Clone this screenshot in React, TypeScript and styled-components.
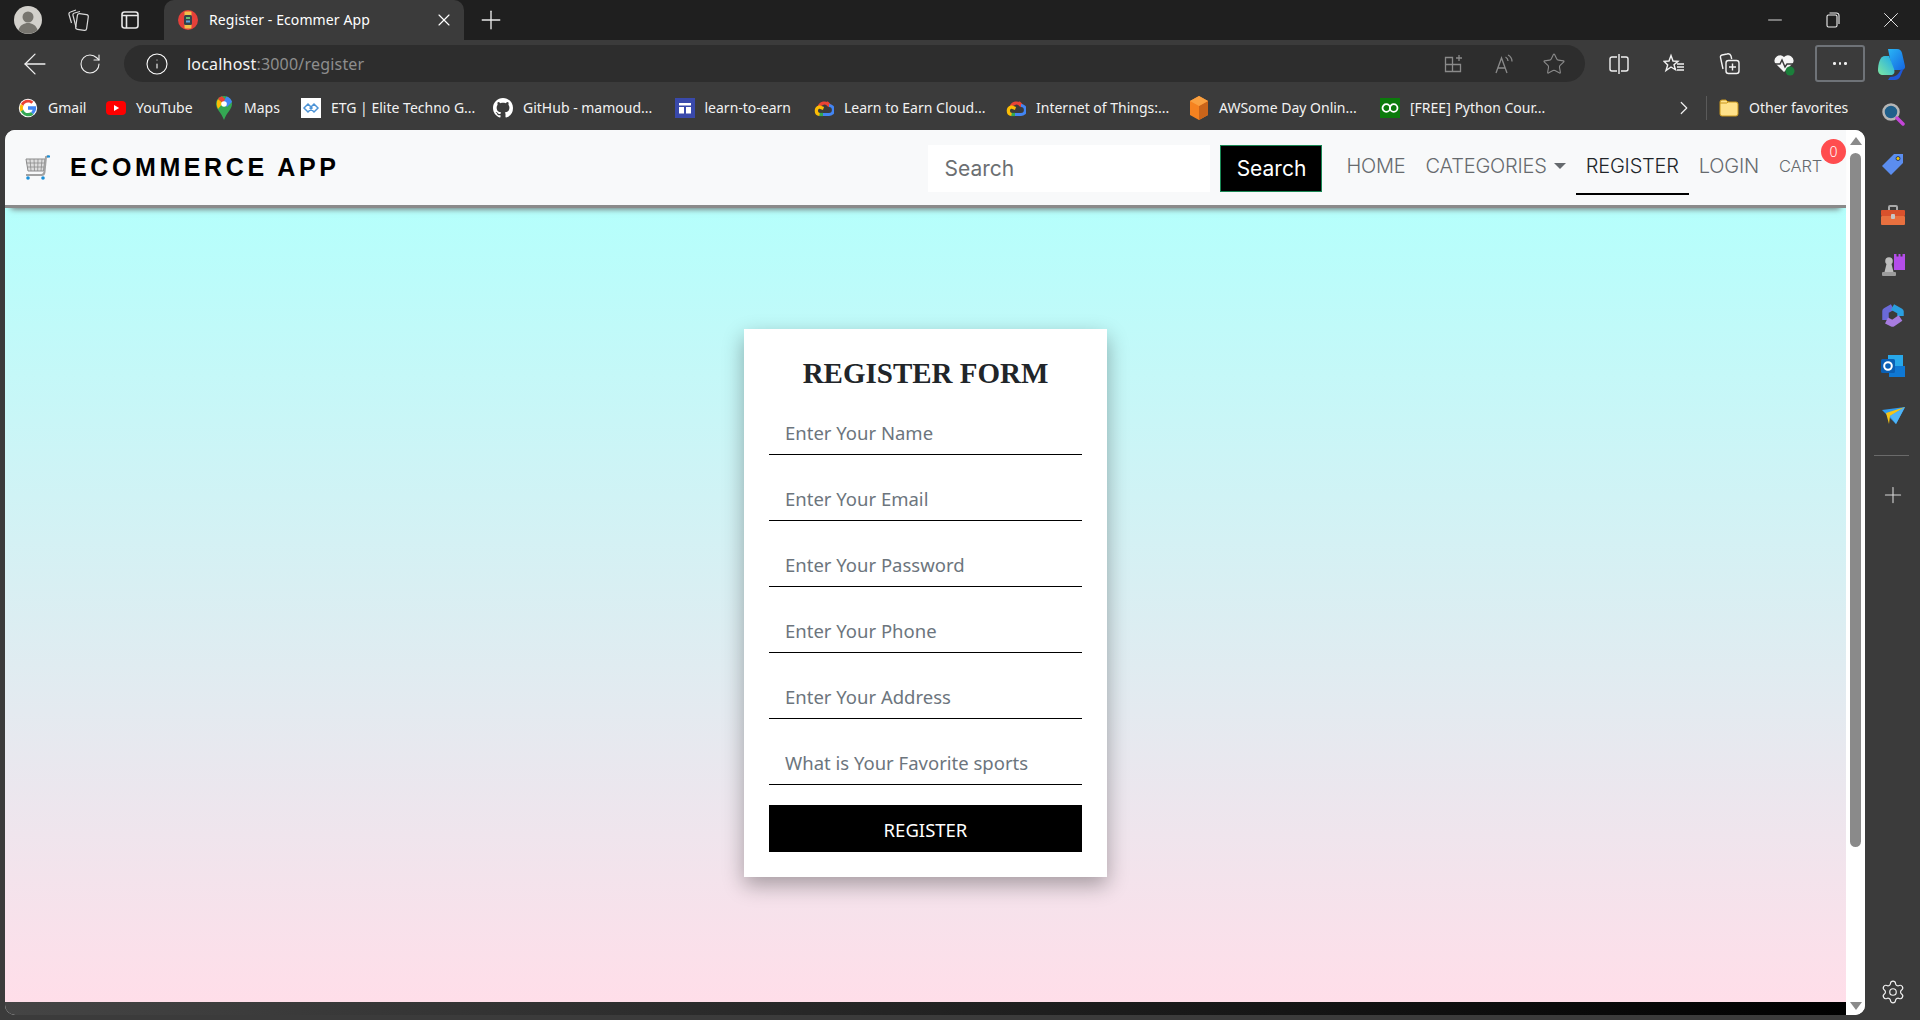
import React from "react"
import styled, { createGlobalStyle } from "styled-components"
import {
  ArrowLeft,
  ChevronRight,
  Info,
  Minus,
  Plus,
  RotateCw,
  Settings,
  Star,
  X,
} from "lucide-react"

const GlobalStyle = createGlobalStyle`
  html, body {
    margin: 0;
    padding: 0;
    background: #3b3b3b;
  }
  * {
    box-sizing: border-box;
  }
`

const Shell = styled.div`
  width: 1920px;
  height: 1020px;
  overflow: hidden;
  display: flex;
  flex-direction: column;
  background: #3b3b3b;
  font-family: "Noto Sans", sans-serif;
  color: #fff;
`

const TabStrip = styled.div`
  height: 40px;
  flex: none;
  display: flex;
  align-items: stretch;
  padding-left: 4px;
  background: #1f1f1f;
`

const Slot = styled.div<{ $w: number }>`
  width: ${p => p.$w}px;
  flex: none;
  display: flex;
  align-items: center;
  justify-content: center;
  color: #e8e8e8;
`

const Tab = styled.div`
  width: 300px;
  margin-left: 8px;
  flex: none;
  display: flex;
  align-items: center;
  background: #3b3b3b;
  border-radius: 10px 10px 0 0;
  padding: 0 10px 0 14px;
`

const TabTitle = styled.span`
  margin-left: 11px;
  padding-bottom: 2px;
  font-size: 14px;
  letter-spacing: 0.1px;
  flex: 1;
  white-space: nowrap;
`

const Spacer = styled.div`
  flex: 1;
`

const Toolbar = styled.div`
  height: 42px;
  flex: none;
  display: flex;
  align-items: flex-end;
  padding: 0 0 0 7px;
`

const ToolSlot = styled.div<{ $w: number }>`
  width: ${p => p.$w}px;
  height: 37px;
  flex: none;
  display: flex;
  align-items: center;
  justify-content: center;
  color: #f0f0f0;
`

const AddressBar = styled.div`
  width: 1461px;
  height: 37px;
  margin-left: 7px;
  margin-right: 6px;
  flex: none;
  display: flex;
  align-items: center;
  padding: 0 6px 0 21px;
  background: #2d2d2d;
  border-radius: 19px;
`

const Url = styled.div`
  margin-left: 18px;
  flex: 1;
  font-size: 16px;
  letter-spacing: 0.2px;
  color: #f4f4f4;
  span {
    color: #8e8e8e;
  }
`

const AddressIcon = styled.span`
  width: 50px;
  display: flex;
  justify-content: center;
  color: #8a8a8a;
`

const MoreBox = styled.div`
  width: 50px;
  height: 37px;
  margin-left: 4px;
  flex: none;
  display: flex;
  align-items: center;
  justify-content: center;
  gap: 3px;
  border: 2px solid #6f7378;
  border-radius: 3px;
`

const Dot = styled.i`
  width: 2.5px;
  height: 2.5px;
  border-radius: 50%;
  background: #f0f0f0;
`

const Body = styled.div`
  flex: 1;
  display: flex;
  min-height: 0;
`

const MainColumn = styled.div`
  width: 1865px;
  flex: none;
  display: flex;
  flex-direction: column;
`

const BookmarkBar = styled.div`
  height: 48px;
  flex: none;
  display: flex;
  align-items: center;
  padding-left: 18px;
  padding-top: 3px;
`

const Bookmark = styled.div`
  display: flex;
  align-items: center;
  gap: 10px;
  flex: none;
`

const BookmarkIcon = styled.span`
  width: 20px;
  height: 24px;
  flex: none;
  display: flex;
  align-items: center;
  justify-content: center;
`

const BookmarkLabel = styled.span<{ $w: number }>`
  width: ${p => p.$w}px;
  font-size: 14px;
  color: #f2f2f2;
  white-space: nowrap;
`

const BarDivider = styled.div`
  width: 1px;
  height: 24px;
  background: #5a5a5a;
  margin: 0 12px 0 11px;
`

const Viewport = styled.div`
  margin-left: 5px;
  height: 885px;
  flex: none;
  display: flex;
  overflow: hidden;
  border-radius: 10px;
  background: #fff;
`

const Page = styled.div`
  width: 1841px;
  flex: none;
  display: flex;
  flex-direction: column;
`

const Navbar = styled.nav`
  position: relative;
  z-index: 1;
  height: 75px;
  flex: none;
  display: flex;
  align-items: center;
  padding: 0 14px 0 20px;
  background: #f8f9fa;
  box-shadow: 0 3px 0 #8a8a8a, 0 10px 6px -6px #6f6f6f;
`

const Brand = styled.div`
  display: flex;
  align-items: center;
  gap: 19px;
  font-family: "Liberation Sans", sans-serif;
  font-size: 25px;
  font-weight: 700;
  letter-spacing: 3.6px;
  color: #000;
`

const SearchInput = styled.div`
  width: 282px;
  height: 47px;
  margin-top: 1px;
  display: flex;
  align-items: center;
  padding: 1px 0 0 16px;
  background: #fff;
  font-family: Inter, sans-serif;
  font-size: 21px;
  color: #6c6f72;
`

const SearchButton = styled.div`
  width: 102px;
  height: 47px;
  margin: 1px 0 0 10px;
  display: flex;
  align-items: center;
  justify-content: center;
  padding-top: 1px;
  background: #000;
  border: 1px solid #198754;
  font-family: Inter, sans-serif;
  font-size: 21px;
  color: #fff;
`

const NavLinks = styled.div`
  margin-left: 14px;
  display: flex;
  align-items: stretch;
  height: 54px;
`

const NavLink = styled.div<{ $active?: boolean; $small?: boolean }>`
  position: relative;
  display: flex;
  align-items: center;
  gap: 7px;
  padding: 0 10px 1px;
  font-family: Inter, sans-serif;
  font-weight: 300;
  font-size: ${p => (p.$small ? 16.5 : 20)}px;
  letter-spacing: -0.2px;
  white-space: nowrap;
  color: ${p => (p.$active ? "#212529" : "#666a6e")};
  border-bottom: 2px solid ${p => (p.$active ? "#000" : "transparent")};
`

const Caret = styled.i`
  width: 0;
  height: 0;
  border-left: 6px solid transparent;
  border-right: 6px solid transparent;
  border-top: 6px solid #666a6e;
`

const Badge = styled.span`
  position: absolute;
  right: -14px;
  top: -2px;
  width: 25px;
  height: 25px;
  display: flex;
  align-items: center;
  justify-content: center;
  border-radius: 50%;
  background: #ff4d4f;
  color: #fff;
  font-family: "Noto Sans", sans-serif;
  font-size: 14px;
  letter-spacing: 0;
`

const Hero = styled.main`
  flex: 1;
  display: flex;
  align-items: center;
  justify-content: center;
  padding-bottom: 1px;
  background-image: linear-gradient(0deg, #ffdee9 0%, #b5fffc 100%);
`

const FormCard = styled.form`
  width: 363px;
  height: 548px;
  padding: 25px;
  display: flex;
  flex-direction: column;
  background: #fff;
  box-shadow: 0 8px 20px rgba(0, 0, 0, 0.32);
`

const FormTitle = styled.h4`
  margin: 0 0 18px;
  height: 37px;
  padding-top: 1px;
  text-align: center;
  font-family: "Liberation Serif", serif;
  font-weight: 700;
  font-size: 29px;
  line-height: 36px;
  color: #212529;
`

const Field = styled.input`
  width: 100%;
  height: 46px;
  flex: none;
  margin-bottom: 20px;
  padding: 1px 16px 0;
  border: none;
  border-bottom: 1.5px solid #000;
  outline: none;
  background: transparent;
  font-family: "Noto Sans", sans-serif;
  font-size: 18.5px;
  color: #212529;
  &::placeholder {
    color: #6c757d;
    opacity: 1;
  }
`

const SubmitButton = styled.button`
  width: 100%;
  height: 47px;
  flex: none;
  padding-top: 2px;
  border: none;
  background: #000;
  color: #fff;
  font-family: "Noto Sans", sans-serif;
  font-size: 18.5px;
`

const Scrollbar = styled.div`
  width: 19px;
  flex: none;
  display: flex;
  flex-direction: column;
  align-items: center;
  background: #fff;
  padding-top: 7px;
`

const ArrowUp = styled.i`
  width: 0;
  height: 0;
  border-left: 6px solid transparent;
  border-right: 6px solid transparent;
  border-bottom: 8px solid #8a8a8a;
`

const ArrowDown = styled.i`
  width: 0;
  height: 0;
  margin-top: auto;
  margin-bottom: 5px;
  border-left: 6px solid transparent;
  border-right: 6px solid transparent;
  border-top: 8px solid #8a8a8a;
`

const Thumb = styled.div`
  width: 11px;
  height: 694px;
  margin-top: 8px;
  border-radius: 6px;
  background: #8a8a8a;
`

const BottomBar = styled.div`
  height: 13px;
  flex: none;
  background: linear-gradient(90deg, #454545 0%, #000 100%);
`

const Sidebar = styled.aside`
  width: 55px;
  flex: none;
  display: flex;
  flex-direction: column;
  align-items: center;
  padding: 7px 0 3px;
  color: #d8d8d8;
`

const SideSlot = styled.div`
  height: 50.3px;
  width: 100%;
  flex: none;
  display: flex;
  align-items: center;
  justify-content: center;
`

const SideDivider = styled.div`
  width: 35px;
  height: 1px;
  margin: 14px 0 14px -2px;
  flex: none;
  background: #6a6a6a;
`

const SettingsSlot = styled(SideSlot)`
  margin-top: auto;
  color: #f0f0f0;
`

const Avatar = () => (
  <svg width="28" height="28" viewBox="0 0 28 28">
    <circle cx="14" cy="14" r="14" fill="#d2d0cb" />
    <circle cx="14" cy="11" r="5.5" fill="#77756f" />
    <path d="M4.5 24c1.5-5 5.500-7 9.500-7s8 2 9.500 7a14 14 0 0 1-19 0z" fill="#77756f" />
  </svg>
)

const CollectionsTabs = () => (
  <svg width="24" height="24" viewBox="0 0 24 24" fill="none" stroke="#d8d8d8" strokeWidth="1.2">
    <rect x="10.500" y="6" width="11" height="16" rx="2" transform="rotate(8 16 14)" />
    <path d="M10 19 7 7.500A2 2 0 0 1 8.500 5L14 3.500" />
    <path d="M5.500 15 3 6.500A2 2 0 0 1 4.500 4L10 2" />
  </svg>
)

const VerticalTabs = () => (
  <svg width="20" height="20" viewBox="0 0 20 20" fill="none" stroke="#e8e8e8" strokeWidth="1.6">
    <rect x="2" y="2" width="16" height="16" rx="2.500" />
    <path d="M2 5.500h16M6.500 5.500V18" />
  </svg>
)

const SiteFavicon = () => (
  <svg width="20" height="20" viewBox="0 0 20 20">
    <circle cx="10" cy="10" r="10" fill="#e5403a" />
    <rect x="6.500" y="1.500" width="7" height="17" rx="1" fill="#f0c04a" />
    <rect x="6" y="5" width="8" height="10" rx="1.500" fill="#35424a" />
    <rect x="8" y="7" width="4" height="2" fill="#63c174" />
    <rect x="8" y="10.500" width="4" height="2" fill="#63a6e0" />
  </svg>
)

const RestoreIcon = () => (
  <svg width="14" height="16" viewBox="0 0 14 16" fill="none" stroke="#f0f0f0" strokeWidth="1.1">
    <rect x="1" y="3" width="10" height="12" rx="1.500" />
    <path d="M3.500 1h7A2.500 2.500 0 0 1 13 3.500V12" />
  </svg>
)

const AppsAdd = () => (
  <svg width="20" height="20" viewBox="0 0 20 20" fill="none" stroke="#8a8a8a" strokeWidth="1.300">
    <path d="M1.500 3.500h7v14h-7zM8.500 10.500h8v7h-8zM1.500 10.500h7M15 1v6M12 4h6" />
  </svg>
)

const ReadAloud = () => (
  <svg width="20" height="20" viewBox="0 0 20 20" fill="none" stroke="#8a8a8a" strokeWidth="1.300">
    <path d="M2 19 7.500 4 13 19M4 14h7M11.500 3c1.500.8 2.500 2.300 2.500 4M14 1c2.500 1.300 4 3.500 4 6.500" />
  </svg>
)

const SplitIcon = () => (
  <svg width="20" height="22" viewBox="0 0 20 22" fill="none" stroke="#f2f2f2" strokeWidth="1.400">
    <path d="M8 4H3a2 2 0 0 0-2 2v10a2 2 0 0 0 2 2h5M12 4h5a2 2 0 0 1 2 2v10a2 2 0 0 1-2 2h-5M10 1v20" />
  </svg>
)

const FavoritesIcon = () => (
  <svg width="22" height="22" viewBox="0 0 22 22" fill="none" stroke="#f2f2f2" strokeWidth="1.400">
    <path d="M8 2.500 10 8l5 .3-4 3.500 1.500 5L8 14l-5 3.500 1.700-5.500L1 8.300 6 8z" />
    <path d="M14 11h7M14 14h7M14 17h7" />
  </svg>
)

const CollectionsIcon = () => (
  <svg width="22" height="24" viewBox="0 0 22 24" fill="none" stroke="#f2f2f2" strokeWidth="1.400">
    <path d="M9 2 4 3a2 2 0 0 0-1.500 2.500L5 17M9 2c2-.5 3.500.5 4 2l.7 3" />
    <rect x="8" y="8.500" width="13" height="13" rx="2.500" />
    <path d="M14.500 11.500v7M11 15h7" />
  </svg>
)

const HeartIcon = () => (
  <svg width="24" height="24" viewBox="0 0 24 24">
    <path d="M12 20 3 11a5.500 5.500 0 0 1 9-6 5.500 5.500 0 0 1 9 6z" fill="#f5f5f5" />
    <path d="M2 12h6l2-4 3 7 2-3h7" fill="none" stroke="#3b3b3b" strokeWidth="1.500" />
    <circle cx="18" cy="19" r="4.500" fill="#1b7f3b" />
  </svg>
)

const CopilotIcon = () => (
  <svg width="30" height="32" viewBox="0 0 30 32">
    <defs>
      <linearGradient id="cpA" x1="0" y1="0" x2="1" y2="1">
        <stop offset="0" stopColor="#29b6f6" />
        <stop offset="1" stopColor="#1565e0" />
      </linearGradient>
      <linearGradient id="cpB" x1="0" y1="1" x2="1" y2="0">
        <stop offset="0" stopColor="#7ee7a0" />
        <stop offset="1" stopColor="#19a8f0" />
      </linearGradient>
    </defs>
    <path d="M11 1h9c3 0 4.500 2 5 4l3 13c.5 2-1 4-3.500 4H16l-3-11z" fill="url(#cpA)" />
    <path d="M8 8h4l5 13c1 3 .5 5-2 6H6c-3 0-5-2-5-5 0-6 2-14 7-14z" fill="url(#cpB)" />
    <path d="M13 29c6 0 9-3 11-8l2 1-3 7c-1 2-3 3-5 3h-7z" fill="#1f57d6" />
  </svg>
)

const GoogleIcon = () => (
  <svg width="20" height="20" viewBox="0 0 48 48">
    <path fill="#fff" d="M24 2a22 22 0 1 0 0 44 22 22 0 0 0 0-44z" />
    <path fill="#ea4335" d="M24 11c3.500 0 6 1.300 8 3l5-5c-3.400-3-7.800-5-13-5C16.500 4 10 8.300 6.800 14.500l5.900 4.600C14.200 14.500 18.700 11 24 11z" />
    <path fill="#4285f4" d="M43.500 24.500c0-1.600-.1-2.800-.4-4.500H24v8h11c-.5 2.600-2 4.700-4.200 6.200l5.800 4.500c3.800-3.500 6.900-8.500 6.900-14.200z" />
    <path fill="#fbbc05" d="M12.700 28.900a12 12 0 0 1 0-9.800l-5.900-4.600a20 20 0 0 0 0 19z" />
    <path fill="#34a853" d="M24 44c5.400 0 9.800-1.800 13-5.300l-6.200-4.500c-1.700 1.200-4 2-6.800 2-5.300 0-9.800-3.600-11.300-8.300l-5.900 4.600C10 38 16.500 44 24 44z" />
  </svg>
)

const YouTubeIcon = () => (
  <svg width="20" height="20" viewBox="0 0 20 20">
    <rect y="3" width="20" height="14" rx="4" fill="#f00" />
    <path d="M8 7l5.200 3L8 13z" fill="#fff" />
  </svg>
)

const MapsIcon = () => (
  <svg width="16" height="24" viewBox="0 0 16 24">
    <path d="M8 0a8 8 0 0 1 8 8c0 5-5 8-8 16-3-8-8-11-8-16a8 8 0 0 1 8-8z" fill="#34a853" />
    <path d="M2 3l5 4-5 6C.5 10 0 6 2 3z" fill="#fbbc05" />
    <path d="M2 3a8 8 0 0 1 4-2.800L10 4 7 7z" fill="#ea4335" />
    <path d="M10.500.500A8 8 0 0 1 16 6l-5 5-4-4z" fill="#4285f4" />
    <circle cx="8" cy="8" r="2.800" fill="#fff" />
  </svg>
)

const EtgIcon = () => (
  <svg width="20" height="20" viewBox="0 0 20 20">
    <rect width="20" height="20" fill="#fff" />
    <path d="M3 10l4-4 4 4-4 4zM9 10l4-4 4 4-4 4z" fill="none" stroke="#4c93d6" strokeWidth="1.500" />
  </svg>
)

const GithubIcon = () => (
  <svg width="20" height="20" viewBox="0 0 16 16">
    <path
      fill="#fff"
      d="M8 0C3.580 0 0 3.580 0 8c0 3.540 2.290 6.530 5.470 7.590.4.070.55-.170.55-.380 0-.190-.010-.820-.010-1.490-2.010.370-2.530-.490-2.690-.940-.090-.230-.480-.940-.820-1.130-.280-.150-.680-.520-.010-.530.630-.010 1.080.580 1.230.820.720 1.210 1.870.870 2.330.660.070-.520.280-.870.510-1.070-1.780-.200-3.640-.890-3.640-3.950 0-.870.310-1.590.820-2.150-.080-.200-.360-1.020.080-2.120 0 0 .670-.210 2.200.820.640-.180 1.320-.270 2-.270s1.360.090 2 .270c1.530-1.040 2.200-.820 2.200-.820.440 1.100.160 1.920.080 2.120.510.560.820 1.270.820 2.150 0 3.070-1.870 3.750-3.650 3.950.290.250.540.730.540 1.480 0 1.070-.010 1.930-.010 2.200 0 .210.150.460.550.380A8.010 8.010 0 0 0 16 8c0-4.420-3.580-8-8-8z"
    />
  </svg>
)

const LearnIcon = () => (
  <svg width="20" height="20" viewBox="0 0 20 20">
    <rect width="20" height="20" fill="#3949ab" />
    <rect x="4" y="5" width="12" height="2.500" fill="#fff" />
    <rect x="4" y="9" width="5" height="6.500" fill="#fff" />
    <rect x="11" y="9" width="5" height="6.500" fill="#fff" />
  </svg>
)

const CloudIcon = () => (
  <svg width="20" height="18" viewBox="0 0 20 18" fill="none" strokeWidth="3.200">
    <path d="M5 8.500a5.500 5.500 0 0 1 10-2" stroke="#ea4335" />
    <path d="M12.500 3.500 16 7" stroke="#ea4335" />
    <path d="M15 6.500a4.500 4.500 0 0 1 0 9H9" stroke="#4285f4" />
    <path d="M9 15.500H5" stroke="#34a853" />
    <path d="M5.500 15.500a3.800 3.800 0 0 1 0-7.500l4 1.500" stroke="#fbbc05" />
  </svg>
)

const AwsIcon = () => (
  <svg width="20" height="24" viewBox="0 0 20 24">
    <path d="M10 0l9 5v14l-9 5-9-5V5z" fill="#f58220" />
    <path d="M10 10l9-5v14l-9 5z" fill="#c9641a" />
    <path d="M10 10 1 5l9-5 9 5z" fill="#f9a040" />
  </svg>
)

const InfinityIcon = () => (
  <svg width="20" height="20" viewBox="0 0 20 20">
    <rect width="20" height="20" fill="#0b7a0b" />
    <circle cx="6.300" cy="10" r="3.800" fill="none" stroke="#fff" strokeWidth="1.800" />
    <circle cx="13.700" cy="10" r="3.800" fill="none" stroke="#fff" strokeWidth="1.800" />
  </svg>
)

const FolderIcon = () => (
  <svg width="20" height="20" viewBox="0 0 20 20">
    <path d="M1 4a2 2 0 0 1 2-2h4l2 2h8a2 2 0 0 1 2 2v10a2 2 0 0 1-2 2H3a2 2 0 0 1-2-2z" fill="#ffe28a" stroke="#c9971c" />
    <path d="M1 5h7L9.500 3.500" fill="none" stroke="#c9971c" />
  </svg>
)

const CartLogo = () => (
  <svg width="26" height="26" viewBox="0 0 26 26" fill="none">
    <path d="M1 4h19l-1.500 12H3z" fill="#dcdcdc" stroke="#8b8b8b" />
    <path d="M5 4l1 12M9 4l.5 12M13 4l-.3 12M17 4l-1 12M1.500 8h18M2.300 12h16.500" stroke="#8b8b8b" strokeWidth="0.800" />
    <path d="M24 1l-3 1-1.500 15c-.3 2-1 3-3 3H1" stroke="#a2a2a2" strokeWidth="2" />
    <path d="M22 0.500h3v2h-3z" fill="#1a8fd8" />
    <circle cx="3" cy="23" r="1.800" fill="#1a8fd8" />
    <circle cx="18" cy="23" r="1.800" fill="#1a8fd8" />
  </svg>
)

const SearchApp = () => (
  <svg width="24" height="24" viewBox="0 0 24 24">
    <circle cx="10" cy="10" r="7.500" fill="#1f5f8b" stroke="#b5b5b5" strokeWidth="2.500" />
    <path d="M16 16l6 6" stroke="#c445d8" strokeWidth="3.500" strokeLinecap="round" />
  </svg>
)

const TagApp = () => (
  <svg width="24" height="24" viewBox="0 0 24 24">
    <path d="M13 2h9v9L10 23 1 14z" fill="#5b8def" />
    <circle cx="17" cy="6.500" r="2" fill="#f2c400" stroke="#1d3a7a" />
  </svg>
)

const ToolboxApp = () => (
  <svg width="24" height="22" viewBox="0 0 24 22">
    <path d="M8 6V3a1 1 0 0 1 1-1h6a1 1 0 0 1 1 1v3" fill="none" stroke="#a9a9a9" strokeWidth="2" />
    <rect y="6" width="24" height="6" rx="1" fill="#d9512c" />
    <rect y="12" width="24" height="9" rx="1" fill="#e8703f" />
    <rect x="10" y="10" width="4" height="5" rx="1" fill="#c7c7c7" />
  </svg>
)

const ChessApp = () => (
  <svg width="24" height="24" viewBox="0 0 24 24">
    <path d="M13 1h2.500v2.500h2V1h2v2.500h2V1H24v16H13z" fill="#b44dea" />
    <circle cx="8" cy="8" r="3.800" fill="#bdbdbd" />
    <path d="M5.500 11h5l2 8h-9z" fill="#bdbdbd" />
    <rect x="1" y="19" width="14" height="4" rx="1" fill="#9c9c9c" />
  </svg>
)

const M365App = () => (
  <svg width="22" height="24" viewBox="0 0 22 24" fill="none" strokeWidth="6.500" strokeLinejoin="round">
    <path d="M3.500 17V8l7-4" stroke="#6a6ad8" />
    <path d="M10.500 4l8 4.500V13" stroke="#2a9fe0" />
    <path d="M18.500 15l-8 5.500-6-3" stroke="#a77ce0" />
  </svg>
)

const OutlookApp = () => (
  <svg width="24" height="24" viewBox="0 0 24 24">
    <rect x="7" y="1" width="15" height="12" fill="#28a8ea" />
    <path d="M8 12h16v11H8z" fill="#0f78d4" />
    <rect y="5" width="14" height="14" rx="1.500" fill="#0a5fb4" />
    <circle cx="7" cy="12" r="3.800" fill="none" stroke="#fff" strokeWidth="2" />
  </svg>
)

const SendApp = () => (
  <svg width="24" height="20" viewBox="0 0 24 20">
    <path d="M1 4l23-3-9 17-6-6z" fill="#2f9bf0" />
    <path d="M5 7 24 1 9 10l-1 8z" fill="#f5c518" />
    <path d="M9 10 24 1 15 18z" fill="#4fb4f7" />
  </svg>
)

const bookmarks = [
  { icon: <GoogleIcon />, label: "Gmail", w: 58 },
  { icon: <YouTubeIcon />, label: "YouTube", w: 78 },
  { icon: <MapsIcon />, label: "Maps", w: 57 },
  { icon: <EtgIcon />, label: "ETG | Elite Techno G...", w: 162 },
  { icon: <GithubIcon />, label: "GitHub - mamoud...", w: 151.5 },
  { icon: <LearnIcon />, label: "learn-to-earn", w: 109.5 },
  { icon: <CloudIcon />, label: "Learn to Earn Cloud...", w: 162 },
  { icon: <CloudIcon />, label: "Internet of Things:...", w: 153 },
  { icon: <AwsIcon />, label: "AWSome Day Onlin...", w: 161 },
  { icon: <InfinityIcon />, label: "[FREE] Python Cour...", w: 140 },
]

const fields = [
  "Enter Your Name",
  "Enter Your Email",
  "Enter Your Password",
  "Enter Your Phone",
  "Enter Your Address",
  "What is Your Favorite sports",
]

export default function App() {
  return (
    <Shell>
      <GlobalStyle />
      <TabStrip>
        <Slot $w={48}>
          <Avatar />
        </Slot>
        <Slot $w={52}>
          <CollectionsTabs />
        </Slot>
        <Slot $w={52}>
          <VerticalTabs />
        </Slot>
        <Tab>
          <SiteFavicon />
          <TabTitle>Register - Ecommer App</TabTitle>
          <X size={20} strokeWidth={1.4} />
        </Tab>
        <Slot $w={54}>
          <Plus size={30} strokeWidth={1.1} />
        </Slot>
        <Spacer />
        <Slot $w={58}>
          <Minus size={22} strokeWidth={1} />
        </Slot>
        <Slot $w={58}>
          <RestoreIcon />
        </Slot>
        <Slot $w={58}>
          <X size={26} strokeWidth={0.9} />
        </Slot>
      </TabStrip>
      <Toolbar>
        <ToolSlot $w={56}>
          <ArrowLeft size={34} strokeWidth={0.9} />
        </ToolSlot>
        <ToolSlot $w={54}>
          <RotateCw size={24} strokeWidth={1.1} />
        </ToolSlot>
        <AddressBar>
          <Info size={24} strokeWidth={1.1} />
          <Url>
            localhost<span>:3000/register</span>
          </Url>
          <AddressIcon>
            <AppsAdd />
          </AddressIcon>
          <AddressIcon>
            <ReadAloud />
          </AddressIcon>
          <AddressIcon>
            <Star size={24} strokeWidth={1.1} />
          </AddressIcon>
        </AddressBar>
        <ToolSlot $w={55}>
          <SplitIcon />
        </ToolSlot>
        <ToolSlot $w={55}>
          <FavoritesIcon />
        </ToolSlot>
        <ToolSlot $w={55}>
          <CollectionsIcon />
        </ToolSlot>
        <ToolSlot $w={55}>
          <HeartIcon />
        </ToolSlot>
        <MoreBox>
          <Dot />
          <Dot />
          <Dot />
        </MoreBox>
        <ToolSlot $w={54}>
          <CopilotIcon />
        </ToolSlot>
      </Toolbar>
      <Body>
        <MainColumn>
          <BookmarkBar>
            {bookmarks.map(b => (
              <Bookmark key={b.label}>
                <BookmarkIcon>{b.icon}</BookmarkIcon>
                <BookmarkLabel $w={b.w}>{b.label}</BookmarkLabel>
              </Bookmark>
            ))}
            <Spacer />
            <ChevronRight size={22} strokeWidth={1.3} color="#f0f0f0" />
            <BarDivider />
            <Bookmark>
              <BookmarkIcon>
                <FolderIcon />
              </BookmarkIcon>
              <BookmarkLabel $w={116}>Other favorites</BookmarkLabel>
            </Bookmark>
          </BookmarkBar>
          <Viewport>
            <Page>
              <Navbar>
                <Brand>
                  <CartLogo />
                  ECOMMERCE APP
                </Brand>
                <Spacer />
                <SearchInput>Search</SearchInput>
                <SearchButton>Search</SearchButton>
                <NavLinks>
                  <NavLink>HOME</NavLink>
                  <NavLink>
                    CATEGORIES
                    <Caret />
                  </NavLink>
                  <NavLink $active>REGISTER</NavLink>
                  <NavLink>LOGIN</NavLink>
                  <NavLink $small>
                    CART
                    <Badge>0</Badge>
                  </NavLink>
                </NavLinks>
              </Navbar>
              <Hero>
                <FormCard>
                  <FormTitle>REGISTER FORM</FormTitle>
                  {fields.map(f => (
                    <Field key={f} placeholder={f} />
                  ))}
                  <SubmitButton type="button">REGISTER</SubmitButton>
                </FormCard>
              </Hero>
              <BottomBar />
            </Page>
            <Scrollbar>
              <ArrowUp />
              <Thumb />
              <ArrowDown />
            </Scrollbar>
          </Viewport>
        </MainColumn>
        <Sidebar>
          <SideSlot>
            <SearchApp />
          </SideSlot>
          <SideSlot>
            <TagApp />
          </SideSlot>
          <SideSlot>
            <ToolboxApp />
          </SideSlot>
          <SideSlot>
            <ChessApp />
          </SideSlot>
          <SideSlot>
            <M365App />
          </SideSlot>
          <SideSlot>
            <OutlookApp />
          </SideSlot>
          <SideSlot>
            <SendApp />
          </SideSlot>
          <SideDivider />
          <SideSlot>
            <Plus size={26} strokeWidth={1} />
          </SideSlot>
          <SettingsSlot>
            <Settings size={26} strokeWidth={1.1} />
          </SettingsSlot>
        </Sidebar>
      </Body>
    </Shell>
  )
}
